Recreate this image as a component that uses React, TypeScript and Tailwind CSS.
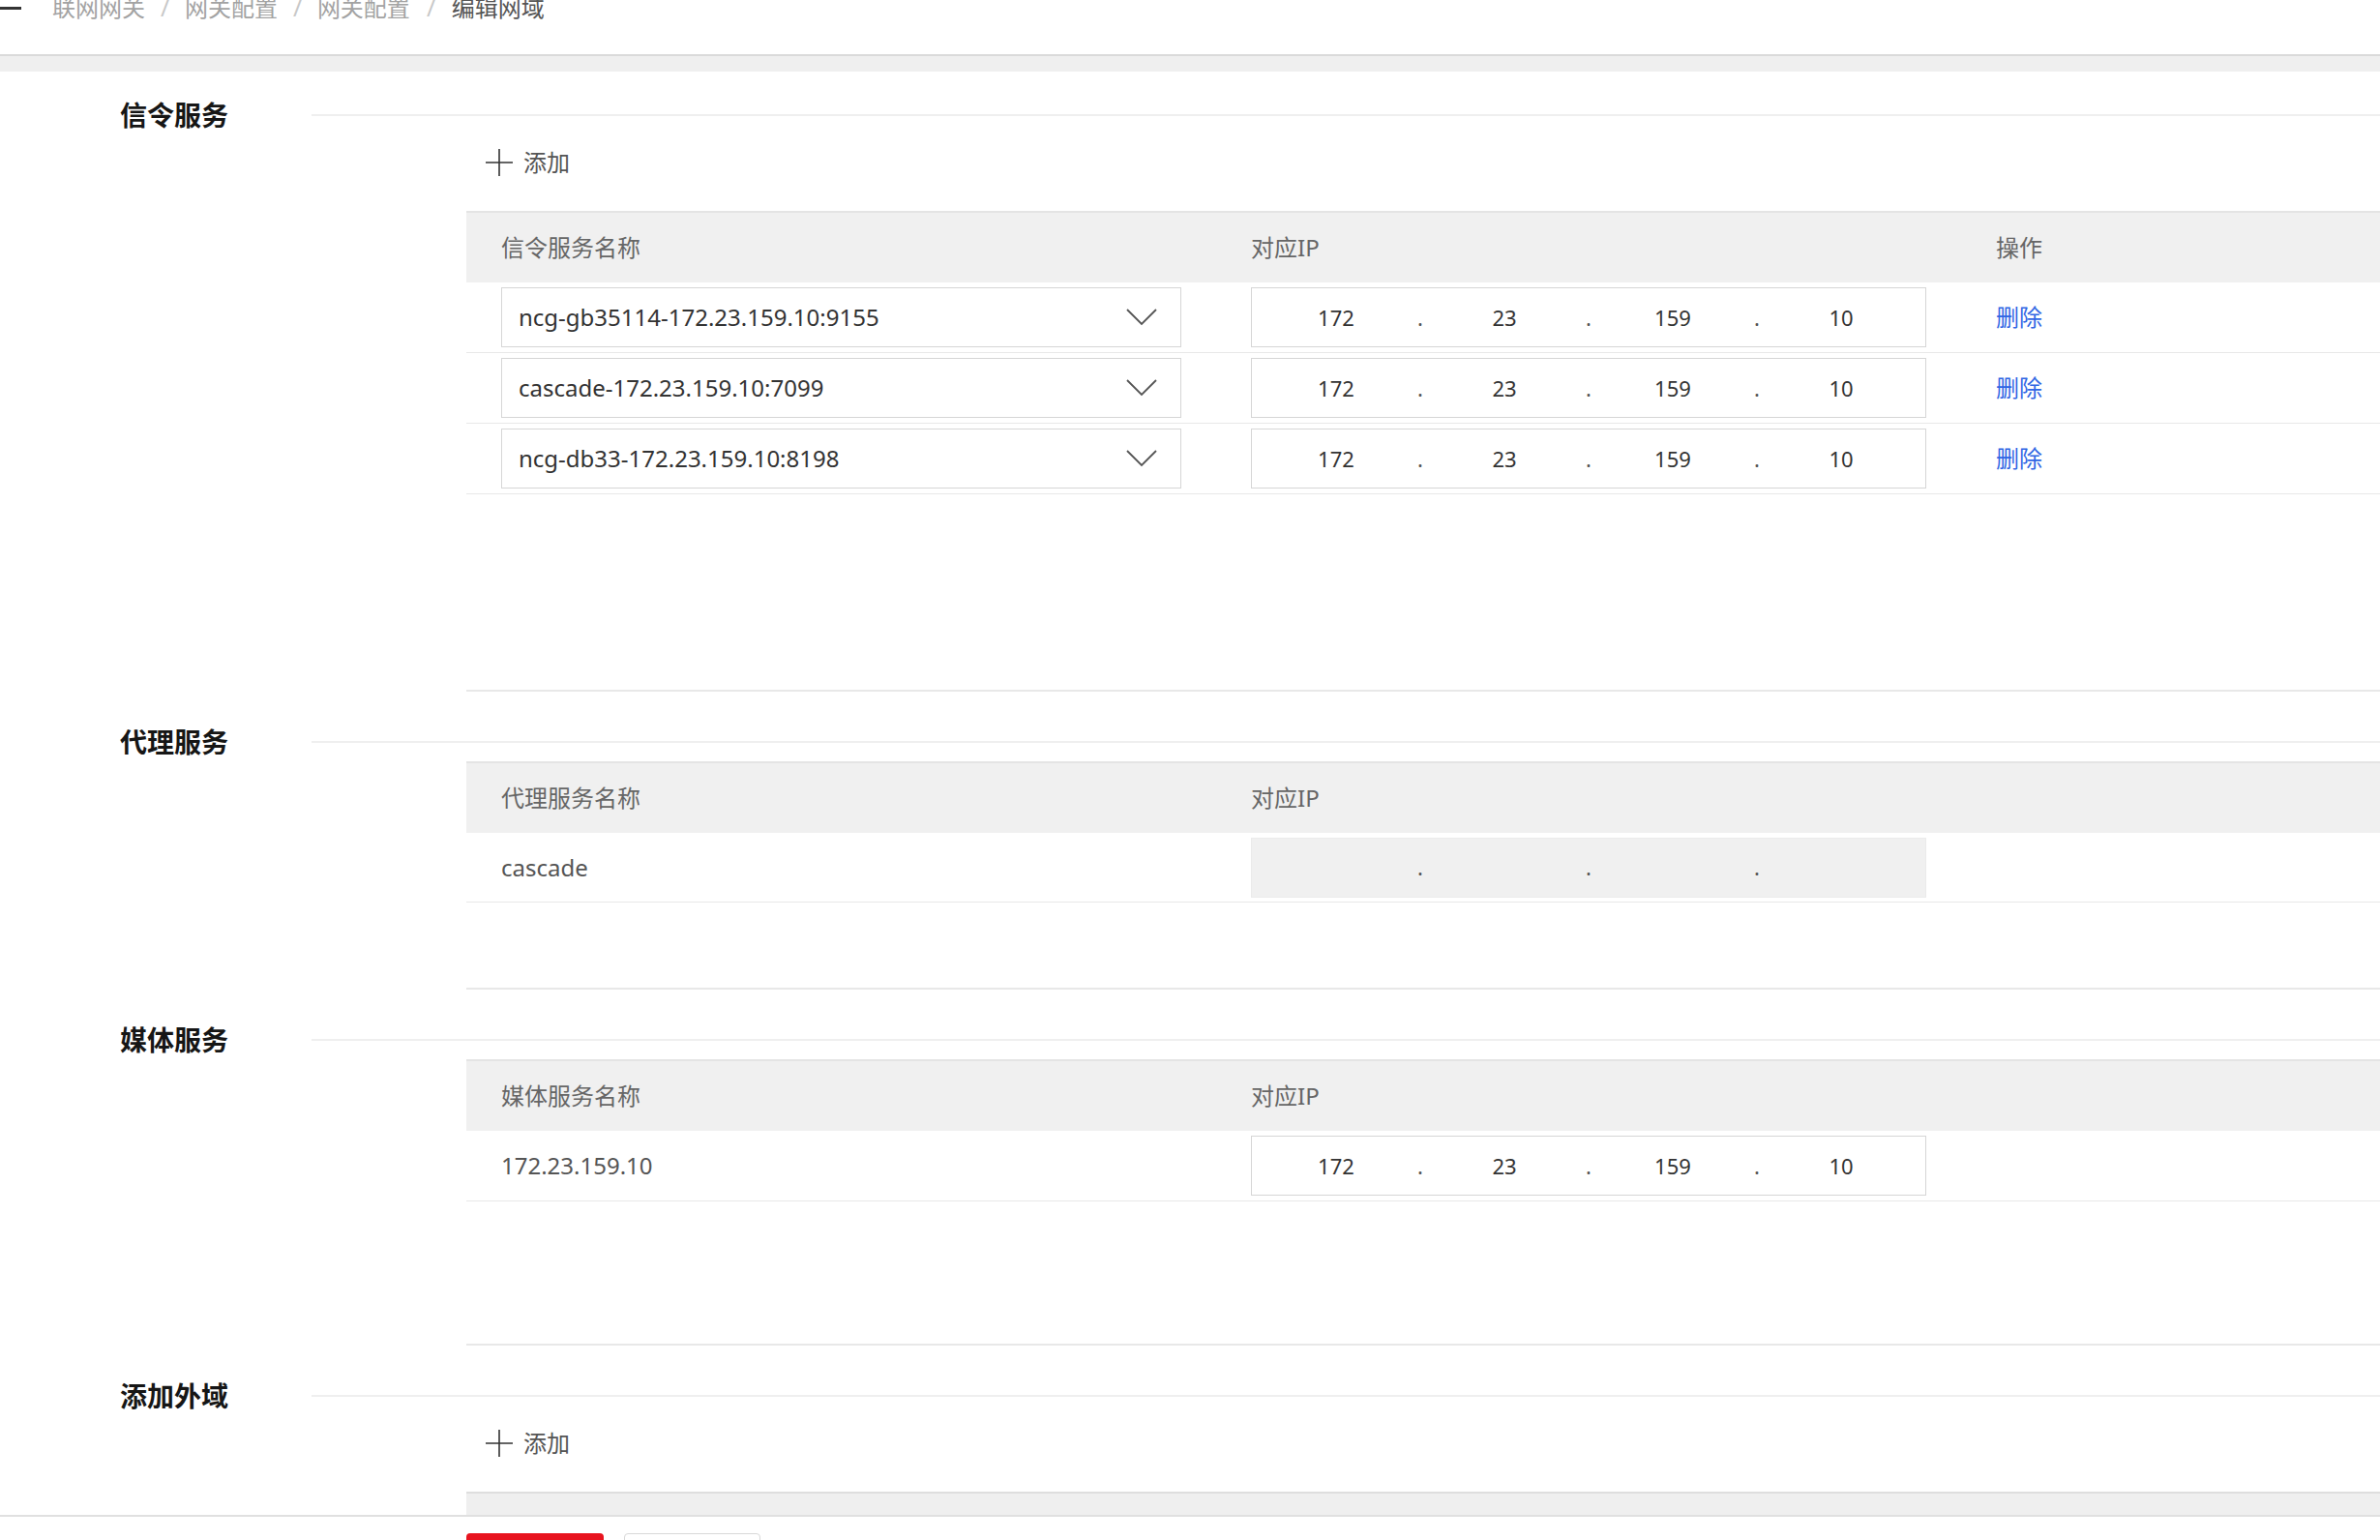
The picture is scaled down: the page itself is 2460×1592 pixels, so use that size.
const IP = ["172", "23", "159", "10"];

const SIGNAL_ROWS = [
  "ncg-gb35114-172.23.159.10:9155",
  "cascade-172.23.159.10:7099",
  "ncg-db33-172.23.159.10:8198",
];

function SectionTitle({ title }: { title: string }) {
  return (
    <div className="flex h-[40px] items-center">
      <div className="w-[322px] pl-[124px] text-[28px] font-bold leading-[40px] text-[#161616]">{title}</div>
      <div className="h-[2px] flex-1 bg-[#efefef]" />
    </div>
  );
}

function AddButton() {
  return (
    <div className="mt-[5px] flex h-[48px] items-center pl-[20px] text-[24px] text-[#555]">
      <svg width="28" height="28" viewBox="0 0 28 28" fill="none">
        <path d="M14 0V28M0 14H28" stroke="#333" strokeWidth="1.6" />
      </svg>
      <span className="ml-[11px]">添加</span>
    </div>
  );
}

function IpInput({ values, disabled }: { values?: string[]; disabled?: boolean }) {
  const segs = values ?? ["", "", "", ""];
  return (
    <div
      className={`flex h-[62px] w-[698px] items-center border text-[22px] text-[#333] ${
        disabled ? "border-[#ebebeb] bg-[#f0f0f0]" : "border-[#d6d6d6] bg-white"
      }`}
    >
      {segs.map((v, i) => (
        <div key={i} className="flex flex-1 items-center">
          <span className="flex-1 text-center">{v}</span>
          {i < 3 && <span className="flex w-0 justify-center text-[#555]">.</span>}
        </div>
      ))}
    </div>
  );
}

function TableHeader({ cols }: { cols: string[] }) {
  return (
    <div className="grid h-[74px] grid-cols-[811px_770px_1fr] items-center border-t-2 border-[#e4e4e4] bg-[#f0f0f0] text-[24px] text-[#666]">
      <div className="pl-[36px]">{cols[0]}</div>
      <div>{cols[1]}</div>
      <div>{cols[2] ?? ""}</div>
    </div>
  );
}

function SelectBox({ value }: { value: string }) {
  return (
    <div className="flex h-[62px] w-[703px] items-center justify-between border border-[#d6d6d6] bg-white pl-[17px] pr-[24px] text-[24px] text-[#333]">
      <span>{value}</span>
      <svg width="32" height="18" viewBox="0 0 32 18" fill="none">
        <polyline points="1,1 16,16 31,1" stroke="#555" strokeWidth="1.8" />
      </svg>
    </div>
  );
}

export default function App() {
  return (
    <div className="flex h-[1592px] w-full flex-col overflow-hidden bg-white font-['Noto_Sans','Noto_Sans_CJK_SC',sans-serif]">
      {/* breadcrumb */}
      <div className="h-[56px] shrink-0">
        <div className="flex h-[16px] items-center text-[24px] leading-[24px] text-[#a3a3a3]">
          <div className="h-[3px] w-[22px] bg-[#333]" />
          <span className="ml-[32px]">联网网关</span>
          <span className="mx-[16px] text-[#c8c8c8]">/</span>
          <span>网关配置</span>
          <span className="mx-[16px] text-[#c8c8c8]">/</span>
          <span>网关配置</span>
          <span className="mx-[17px] text-[#c8c8c8]">/</span>
          <span className="text-[#555]">编辑网域</span>
        </div>
      </div>
      <div className="h-[18px] shrink-0 border-t-2 border-[#dadada] bg-[#efefef]" />

      <div className="h-[1492px] shrink-0 overflow-hidden">
        {/* 信令服务 */}
        <div className="mt-[25px]">
          <SectionTitle title="信令服务" />
          <div className="ml-[482px] border-b-2 border-[#e8e8e8] pb-[202px]">
            <AddButton />
            <div className="mt-[26px]">
              <TableHeader cols={["信令服务名称", "对应IP", "操作"]} />
              {SIGNAL_ROWS.map((name) => (
                <div
                  key={name}
                  className="grid h-[73px] grid-cols-[811px_770px_1fr] items-center border-b border-[#e8e8e8]"
                >
                  <div className="pl-[36px]">
                    <SelectBox value={name} />
                  </div>
                  <div>
                    <IpInput values={IP} />
                  </div>
                  <div className="text-[24px] text-[#2f66e4]">删除</div>
                </div>
              ))}
            </div>
          </div>
        </div>

        {/* 代理服务 */}
        <div className="mt-[32px]">
          <SectionTitle title="代理服务" />
          <div className="ml-[482px] border-b-2 border-[#e8e8e8] pb-[88px]">
            <TableHeader cols={["代理服务名称", "对应IP"]} />
            <div className="grid h-[72px] grid-cols-[811px_770px_1fr] items-center border-b border-[#e8e8e8]">
              <div className="pl-[36px] text-[24px] text-[#555]">cascade</div>
              <div>
                <IpInput disabled />
              </div>
              <div />
            </div>
          </div>
        </div>

        {/* 媒体服务 */}
        <div className="mt-[32px]">
          <SectionTitle title="媒体服务" />
          <div className="ml-[482px] border-b-2 border-[#e8e8e8] pb-[147px]">
            <TableHeader cols={["媒体服务名称", "对应IP"]} />
            <div className="grid h-[73px] grid-cols-[811px_770px_1fr] items-center border-b border-[#e8e8e8]">
              <div className="pl-[36px] text-[24px] text-[#555]">172.23.159.10</div>
              <div>
                <IpInput values={IP} />
              </div>
              <div />
            </div>
          </div>
        </div>

        {/* 添加外域 */}
        <div className="mt-[32px]">
          <SectionTitle title="添加外域" />
          <div className="ml-[482px]">
            <AddButton />
            <div className="mt-[26px] h-[60px] border-t-2 border-[#dedede] bg-[#efefef]" />
          </div>
        </div>
      </div>

      {/* footer */}
      <div className="shrink-0 border-t-2 border-[#e0e0e0] bg-white pl-[482px] pt-[17px]">
        <div className="flex gap-[21px]">
          <button className="h-[48px] w-[142px] rounded-[4px] bg-[#e8141f] text-[22px] text-white">保存</button>
          <button className="h-[48px] w-[141px] rounded-[4px] border border-[#d9d9d9] bg-white text-[22px] text-[#333]">取消</button>
        </div>
      </div>
    </div>
  );
}
